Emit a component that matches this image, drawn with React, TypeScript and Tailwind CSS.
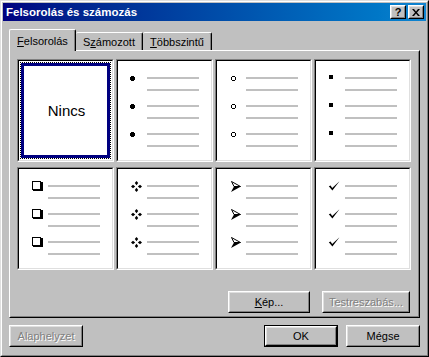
import type { ReactNode } from "react";

// Win98-style raised bevel
const raised =
	"border border-t-white border-l-white border-r-black border-b-black";
const raisedInner =
	"border border-t-[#dfdfdf] border-l-[#dfdfdf] border-r-[#808080] border-b-[#808080]";

function Button({
	children,
	width,
	disabled,
	isDefault,
}: {
	children: ReactNode;
	width: string;
	disabled?: boolean;
	isDefault?: boolean;
}) {
	const body = (
		<div className={`flex h-full w-full bg-[#c0c0c0] ${raised}`}>
			<div
				className={`flex h-full w-full items-center justify-center ${raisedInner} ${
					disabled ? "text-[#808080] [text-shadow:1px_1px_0_#fff]" : "text-black"
				}`}
			>
				{children}
			</div>
		</div>
	);
	return (
		<div className={`h-[22px] ${width} ${isDefault ? "border border-black" : ""}`}>
			{body}
		</div>
	);
}

function CaptionButton({ children }: { children: ReactNode }) {
	return (
		<div className={`h-[14px] w-[16px] bg-[#c0c0c0] ${raised}`}>
			<div
				className={`flex h-full w-full items-center justify-center ${raisedInner}`}
			>
				{children}
			</div>
		</div>
	);
}

function Cell({ children }: { children: ReactNode }) {
	return (
		<div className="border border-t-[#808080] border-l-[#808080] border-r-white border-b-white">
			<div className="h-full border border-t-black border-l-black border-r-[#dfdfdf] border-b-[#dfdfdf] bg-white">
				{children}
			</div>
		</div>
	);
}

const Disc = () => (
	<svg width="5" height="5" viewBox="0 0 5 5" className="ml-[12px] shrink-0" shapeRendering="crispEdges">
		<path d="M1 0H4V1H5V4H4V5H1V4H0V1H1Z" fill="#000" />
	</svg>
);
const Ring = () => (
	<svg width="5" height="5" viewBox="0 0 5 5" className="ml-[14px] shrink-0" shapeRendering="crispEdges">
		<path d="M1 0H4V1H5V4H4V5H1V4H0V1H1Z M1 1V4H4V1Z" fill="#000" fillRule="evenodd" />
	</svg>
);
const Square = () => (
	<div className="mb-[2px] ml-[13px] h-[4px] w-[4px] shrink-0 bg-black" />
);
const Box = () => (
	<svg width="11" height="10" viewBox="0 0 11 10" className="ml-[13px] shrink-0" shapeRendering="crispEdges">
		<rect x="0.5" y="0.5" width="8" height="8" fill="none" stroke="#000" />
		<rect x="9" y="1" width="2" height="9" fill="#000" />
		<rect x="1" y="9" width="10" height="1" fill="#000" />
	</svg>
);
const Ornament = () => (
	<svg width="11" height="11" viewBox="0 0 11 11" className="ml-[13px] shrink-0">
		<path d="M5.5 0 L7.2 2 L5.5 4.2 L3.8 2 Z" fill="#000" />
		<path d="M5.5 6.8 L7.2 9 L5.5 11 L3.8 9 Z" fill="#000" />
		<path d="M0 5.5 L2 3.8 L4.2 5.5 L2 7.2 Z" fill="#000" />
		<path d="M6.8 5.5 L9 3.8 L11 5.5 L9 7.2 Z" fill="#000" />
	</svg>
);
const Arrow = () => (
	<svg width="10" height="11" viewBox="0 0 10 11" className="ml-[14px] shrink-0">
		<path d="M0.5 0.5 L9.5 5.5 L3 5.5 Z" fill="#fff" stroke="#000" strokeWidth="1" />
		<path d="M0 11 L10 5.5 L3 5.5 Z" fill="#000" />
	</svg>
);
const Check = () => (
	<svg width="12" height="10" viewBox="0 0 12 10" className="ml-[12px] shrink-0">
		<path d="M0.8 5.2 L2.6 4.6 L4.2 7 L11.5 0.3 L4.4 9.5 Z" fill="#000" />
	</svg>
);

function BulletCell({ bullet }: { bullet: ReactNode }) {
	return (
		<Cell>
			<div className="flex flex-col gap-[14px] pt-[16px]">
				{[0, 1, 2].map((i) => (
					<div key={i} className="flex">
						<div className="flex h-[2px] w-[29px] items-center">{bullet}</div>
						<div className="flex flex-col gap-[10px]">
							<div className="h-[2px] w-[52px] bg-[#c0c0c0]" />
							<div className="h-[2px] w-[52px] bg-[#c0c0c0]" />
						</div>
					</div>
				))}
			</div>
		</Cell>
	);
}

export default function App() {
	return (
		<div className="h-[357px] w-[429px] border border-t-[#dfdfdf] border-l-[#dfdfdf] border-r-black border-b-black bg-[#c0c0c0] font-['Liberation_Sans',Arial,sans-serif] text-[11px] leading-[13px] text-black">
			<div className="flex h-full flex-col border border-t-white border-l-white border-r-[#808080] border-b-[#808080] p-px">
				{/* Title bar */}
				<div className="flex h-[18px] items-center justify-between bg-gradient-to-r from-[#000080] to-[#1084d0] pl-[3px] pr-[2px]">
					<span className="text-[11.5px] font-bold text-white">
						Felsorolás és számozás
					</span>
					<div className="flex gap-[2px]">
						<CaptionButton>
							<span className="text-[11px] font-bold leading-none">?</span>
						</CaptionButton>
						<CaptionButton>
							<svg width="8" height="7" viewBox="0 0 8 7">
								<path d="M0 0 L2 0 L4 2.5 L6 0 L8 0 L5 3.5 L8 7 L6 7 L4 4.5 L2 7 L0 7 L3 3.5 Z" fill="#000" />
							</svg>
						</CaptionButton>
					</div>
				</div>

				<div className="flex flex-col pl-[6px] pt-[8px]">
					{/* Tabs */}
					<div className="flex h-[21px] items-end">
						<div className="relative z-10 -mb-px flex h-[22px] w-[67px] justify-center rounded-t-[2px] border-l border-t border-r border-l-white border-t-white border-r-black bg-[#c0c0c0] pt-[5px] shadow-[inset_-1px_0_0_#808080]">
							<span>
								<span className="underline">F</span>elsorolás
							</span>
						</div>
						<div className="flex h-[18px] w-[67px] justify-center rounded-t-[2px] border-t border-r border-t-white border-r-black pt-[3px] shadow-[inset_-1px_0_0_#808080]">
							<span>
								S<span className="underline">z</span>ámozott
							</span>
						</div>
						<div className="flex h-[18px] w-[69px] justify-center rounded-t-[2px] border-t border-r border-t-white border-r-black pt-[3px] shadow-[inset_-1px_0_0_#808080]">
							<span>
								<span className="underline">T</span>öbbszintű
							</span>
						</div>
					</div>

					{/* Tab panel */}
					<div className="h-[268px] w-[411px] border border-t-white border-l-white border-r-black border-b-black">
						<div className="flex h-full flex-col border border-t-[#c0c0c0] border-l-[#c0c0c0] border-r-[#808080] border-b-[#808080] pl-[6px] pt-[7px]">
							<div className="grid grid-cols-[repeat(4,97px)] grid-rows-[repeat(2,103px)] gap-x-[2px] gap-y-[5px]">
								<Cell>
									<div className="h-full p-px">
										<div className="h-full border border-dotted border-black">
											<div className="flex h-full items-center justify-center border-[3px] border-[#000080] pl-[2px] text-[15px]">
												Nincs
											</div>
										</div>
									</div>
								</Cell>
								<BulletCell bullet={<Disc />} />
								<BulletCell bullet={<Ring />} />
								<BulletCell bullet={<Square />} />
								<BulletCell bullet={<Box />} />
								<BulletCell bullet={<Ornament />} />
								<BulletCell bullet={<Arrow />} />
								<BulletCell bullet={<Check />} />
							</div>

							<div className="mt-[21px] flex justify-end gap-[12px] pr-[8px]">
								<Button width="w-[82px]">
									<span>
										<span className="underline">K</span>ép...
									</span>
								</Button>
								<Button width="w-[88px]" disabled>
									Testreszabás...
								</Button>
							</div>
						</div>
					</div>

					{/* Bottom buttons */}
					<div className="mt-[7px] flex w-[411px] justify-between">
						<Button width="w-[74px]" disabled>
							Alaphelyzet
						</Button>
						<div className="flex gap-[8px]">
							<Button width="w-[74px]" isDefault>
								OK
							</Button>
							<Button width="w-[74px]">Mégse</Button>
						</div>
					</div>
				</div>
			</div>
		</div>
	);
}
